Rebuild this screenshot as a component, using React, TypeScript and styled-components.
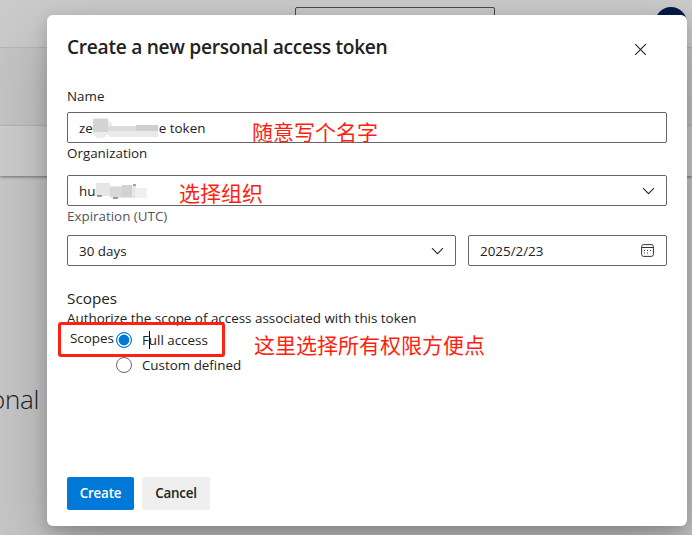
import React from "react";
import styled, { createGlobalStyle } from "styled-components";

const GlobalStyle = createGlobalStyle`
  * { box-sizing: border-box; }
  html, body { margin: 0; overflow: hidden; }
  body { font-family: "Open Sans", "Noto Sans", sans-serif; font-size: 13.4px; color: #222; }
`;

const Page = styled.div`
  position: relative;
  width: 692px;
  height: 535px;
  overflow: hidden;
  background: #c6c6c6;
`;

const TopBar = styled.div`
  display: flex;
  height: 48px;
  padding: 7px 5px 0 295px;
  justify-content: space-between;
  background: #cacaca;
  border-bottom: 1px solid #b4b4b4;
`;

const SearchBox = styled.div`
  width: 200px;
  height: 32px;
  border: 1px solid #484848;
  border-radius: 2px;
`;

const Avatar = styled.div`
  width: 32px;
  height: 32px;
  border-radius: 50%;
  background: #001b49;
`;

const Banner = styled.div`
  height: 78px;
  background: #c4c4c4;
`;

const Band = styled.div`
  height: 50px;
  background: #cbcbcb;
  box-shadow: 0 1px 3px rgba(0, 0, 0, 0.45);
`;

const PageHeading = styled.div`
  margin-top: 203px;
  width: 39px;
  display: flex;
  justify-content: flex-end;
  font-size: 26px;
  line-height: 40px;
  font-weight: 300;
  letter-spacing: -0.3px;
  color: #1c1c1c;
`;

const Dialog = styled.section`
  position: absolute;
  left: 47px;
  top: 15px;
  width: 640px;
  height: 511px;
  padding: 20px;
  border-radius: 6px;
  background: #fff;
  box-shadow: 0 25.6px 57.6px rgba(0, 0, 0, 0.22), 0 4.8px 14.4px rgba(0, 0, 0, 0.18);
  display: flex;
  flex-direction: column;
`;

const Header = styled.header`
  display: flex;
  justify-content: space-between;
  height: 51px;
  padding-right: 20px;
`;

const Title = styled.h1<{ $track: number }>`
  margin: 0;
  font-size: 19.2px;
  line-height: 24px;
  font-weight: 600;
  letter-spacing: ${(p) => p.$track}px;
  white-space: nowrap;
`;

const CloseIcon = styled.svg`
  width: 13px;
  height: 13px;
  margin-top: 8px;
`;

const Label = styled.label<{ $track?: number; $muted?: boolean; $h: number }>`
  display: block;
  height: ${(p) => p.$h}px;
  line-height: 20px;
  letter-spacing: ${(p) => p.$track ?? 0}px;
  color: ${(p) => (p.$muted ? "#555" : "#222")};
  white-space: nowrap;
`;

const Field = styled.div<{ $w?: number }>`
  display: flex;
  align-items: center;
  justify-content: space-between;
  width: ${(p) => (p.$w ? p.$w + "px" : "100%")};
  height: 31px;
  padding: 0 11px;
  border: 1px solid #666;
  border-radius: 2px;
`;

const FieldRow = styled.div`
  display: flex;
  gap: 12px;
`;

const Value = styled.span<{ $track?: number }>`
  line-height: 20px;
  letter-spacing: ${(p) => p.$track ?? 0}px;
  white-space: pre;
`;

const MaskedValue = styled.span`
  display: flex;
  align-items: center;
`;

const NameMosaic = styled.svg`
  width: 66px;
  height: 22px;
`;

const OrgMosaic = styled.svg`
  width: 52px;
  height: 18px;
`;

const ChevronIcon = styled.svg`
  width: 13px;
  height: 8px;
`;

const CalendarIcon = styled.svg`
  width: 13px;
  height: 13px;
  margin-right: 1px;
`;

const ScopesTitle = styled.h2<{ $track: number }>`
  margin: 20px 0 0;
  height: 22px;
  line-height: 24px;
  font-size: 15.3px;
  font-weight: 400;
  letter-spacing: ${(p) => p.$track}px;
`;

const ScopeBody = styled.div`
  display: flex;
  padding: 0 0 0 3px;
`;

const RadioList = styled.div`
  display: flex;
  flex-direction: column;
  gap: 9px;
  padding: 4px 0 0 2px;
`;

const RadioOption = styled.div`
  display: flex;
  align-items: center;
  gap: 10px;
  height: 16px;
`;

const RadioMark = styled.span<{ $on?: boolean }>`
  width: 16px;
  height: 16px;
  border-radius: 50%;
  border: 1px solid ${(p) => (p.$on ? "#0078d7" : "#666")};
  background: ${(p) => (p.$on ? "#0078d7" : "#fff")};
  box-shadow: ${(p) => (p.$on ? "inset 0 0 0 1.6px #fff" : "none")};
  ${(p) => p.$on && "border-width: 1.5px;"}
`;

const Actions = styled.footer`
  display: flex;
  gap: 8px;
  height: 33px;
  margin: auto 0 -4px;
`;

const Button = styled.button<{ $primary?: boolean }>`
  width: ${(p) => (p.$primary ? 67 : 68)}px;
  height: 33px;
  padding: 0 0 1px;
  border: 0;
  border-radius: 2px;
  font: 600 13.4px "Open Sans", sans-serif;
  letter-spacing: -0.2px;
  color: ${(p) => (p.$primary ? "#fff" : "#222")};
  background: ${(p) => (p.$primary ? "#0078d7" : "#efefef")};
`;

const Note = styled.div<{ $x: number; $y: number }>`
  position: absolute;
  left: ${(p) => p.$x}px;
  top: ${(p) => p.$y}px;
  font: 21px/30px "Noto Sans CJK SC", sans-serif;
  color: #ff1e10;
  white-space: nowrap;
`;

const Highlight = styled.div`
  position: absolute;
  left: 58px;
  top: 322px;
  width: 167px;
  height: 35px;
  border: 3px solid #ff2113;
  border-radius: 3px;
`;

const Caret = styled.div`
  position: absolute;
  left: 149px;
  top: 331px;
  width: 1px;
  height: 18px;
  background: #000;
`;

const Chevron = () => (
  <ChevronIcon viewBox="0 0 13 8" fill="none" stroke="#2b2b2b" strokeWidth="1.1">
    <path d="M1 1.2 6.5 6.7 12 1.2" />
  </ChevronIcon>
);

export default function App() {
  return (
    <>
      <GlobalStyle />
      <Page>
        <TopBar>
          <SearchBox />
          <Avatar />
        </TopBar>
        <Banner />
        <Band />
        <PageHeading>onal</PageHeading>

        <Dialog>
          <Header>
            <Title $track={-0.3}>Create a new personal access token</Title>
            <CloseIcon viewBox="0 0 13 13" stroke="#222" strokeWidth="1.1">
              <path d="M1.2 1.2 11.8 11.8M11.8 1.2 1.2 11.8" />
            </CloseIcon>
          </Header>

          <Label $h={26}>Name</Label>
          <Field>
            <MaskedValue>
              <Value>ze</Value>
              <NameMosaic viewBox="0 0 66 22">
                <path d="M1 1h13l4 5h1v12h-6l-2 3H4l-4-4z" fill="#ececec" />
                <path d="M0 2h15v13H0z" fill="#d3d3d3" />
                <path d="M15 9h28v5H15z" fill="#dcdcdc" />
                <path d="M43 8h22v6H43z" fill="#cfcfcf" />
                <path d="M16 14h49v6H16z" fill="#e9e9e9" />
              </NameMosaic>
              <Value>e token</Value>
            </MaskedValue>
          </Field>
          <Label $h={32}>Organization</Label>
          <Field>
            <MaskedValue>
              <Value>hu</Value>
              <OrgMosaic viewBox="0 0 52 18">
                <path d="M1 1h14v3h26v12H15v-2H1z" fill="#e6e6e6" />
                <path d="M15 5h12v10H15z" fill="#d8d8d8" />
                <path d="M27 3h10v12H27z" fill="#d2d2d2" />
                <path d="M40 6h12v10H40z" fill="#f0f0f0" />
                <path d="M2 14h5M18 16h5M38 3h3" stroke="#444" />
              </OrgMosaic>
            </MaskedValue>
            <Chevron />
          </Field>
          <Label $h={29} $muted>Expiration (UTC)</Label>
          <FieldRow>
            <Field $w={389}>
              <Value>30 days</Value>
              <Chevron />
            </Field>
            <Field $w={199}>
              <Value>2025/2/23</Value>
              <CalendarIcon viewBox="0 0 13 13" fill="none" stroke="#333">
                <rect x="0.6" y="0.6" width="11.8" height="11.8" rx="2" />
                <path d="M0.6 3.5h11.8" />
                <path d="M3 6.5h1M6 6.5h1M9 6.5h1M3 9h1M6 9h1" strokeWidth="1.1" />
              </CalendarIcon>
            </Field>
          </FieldRow>

          <ScopesTitle $track={0}>Scopes</ScopesTitle>
          <Label $h={20}>Authorize the scope of access associated with this token</Label>
          <ScopeBody>
            <Label $h={20}>Scopes</Label>
            <RadioList>
              <RadioOption>
                <RadioMark $on />
                <Value>Full access</Value>
              </RadioOption>
              <RadioOption>
                <RadioMark />
                <Value>Custom defined</Value>
              </RadioOption>
            </RadioList>
          </ScopeBody>

          <Actions>
            <Button $primary>Create</Button>
            <Button>Cancel</Button>
          </Actions>
        </Dialog>

        <Highlight />
        <Caret />
        <Note $x={252} $y={116}>随意写个名字</Note>
        <Note $x={179} $y={177}>选择组织</Note>
        <Note $x={254} $y={329}>这里选择所有权限方便点</Note>
      </Page>
    </>
  );
}
